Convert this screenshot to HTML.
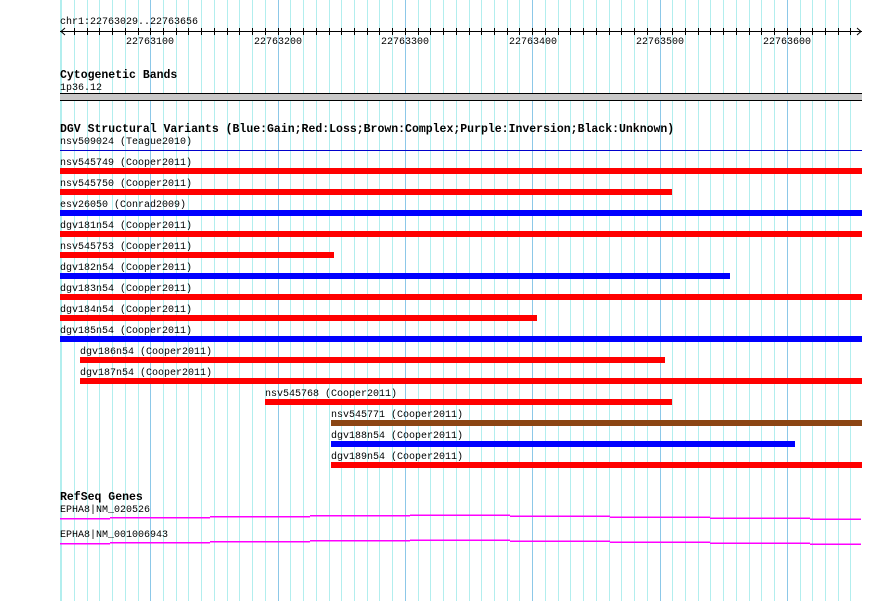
<!DOCTYPE html>
<html><head><meta charset="utf-8"><style>
html,body{margin:0;padding:0;background:#fff;}
svg{display:block}
text{font-family:"Liberation Mono","DejaVu Sans Mono",monospace;font-size:10px;fill:#000}
.b{font-weight:bold;font-size:11.5px}
</style></head><body>
<svg width="890" height="601" xmlns="http://www.w3.org/2000/svg">
<rect width="890" height="601" fill="#fff"/>
<path stroke="#b2eeee" stroke-width="1" fill="none" d="M60.5 0V601M61.5 0V601M74.5 0V601M87.5 0V601M99.5 0V601M112.5 0V601M125.5 0V601M138.5 0V601M163.5 0V601M176.5 0V601M188.5 0V601M201.5 0V601M214.5 0V601M227.5 0V601M239.5 0V601M252.5 0V601M265.5 0V601M290.5 0V601M303.5 0V601M316.5 0V601M329.5 0V601M341.5 0V601M354.5 0V601M367.5 0V601M379.5 0V601M392.5 0V601M418.5 0V601M430.5 0V601M443.5 0V601M456.5 0V601M469.5 0V601M481.5 0V601M494.5 0V601M507.5 0V601M519.5 0V601M545.5 0V601M558.5 0V601M570.5 0V601M583.5 0V601M596.5 0V601M609.5 0V601M621.5 0V601M634.5 0V601M647.5 0V601M672.5 0V601M685.5 0V601M698.5 0V601M710.5 0V601M723.5 0V601M736.5 0V601M749.5 0V601M761.5 0V601M774.5 0V601M800.5 0V601M812.5 0V601M825.5 0V601M838.5 0V601M850.5 0V601"/>
<path stroke="#8cc8e8" stroke-width="1" fill="none" d="M150.5 0V601M278.5 0V601M405.5 0V601M532.5 0V601M660.5 0V601M787.5 0V601"/>
<path stroke="#000" stroke-width="1" fill="none" d="M74.5 28V35M87.5 28V35M99.5 28V35M112.5 28V35M125.5 28V35M138.5 28V35M150.5 28V35M163.5 28V35M176.5 28V35M188.5 28V35M201.5 28V35M214.5 28V35M227.5 28V35M239.5 28V35M252.5 28V35M265.5 28V35M278.5 28V35M290.5 28V35M303.5 28V35M316.5 28V35M329.5 28V35M341.5 28V35M354.5 28V35M367.5 28V35M379.5 28V35M392.5 28V35M405.5 28V35M418.5 28V35M430.5 28V35M443.5 28V35M456.5 28V35M469.5 28V35M481.5 28V35M494.5 28V35M507.5 28V35M519.5 28V35M532.5 28V35M545.5 28V35M558.5 28V35M570.5 28V35M583.5 28V35M596.5 28V35M609.5 28V35M621.5 28V35M634.5 28V35M647.5 28V35M660.5 28V35M672.5 28V35M685.5 28V35M698.5 28V35M710.5 28V35M723.5 28V35M736.5 28V35M749.5 28V35M761.5 28V35M774.5 28V35M787.5 28V35M800.5 28V35M812.5 28V35M825.5 28V35M838.5 28V35M850.5 28V35"/>
<text x="60" y="24">chr1:22763029..22763656</text>
<line x1="60" y1="31.5" x2="862" y2="31.5" stroke="#000"/>
<polyline points="65,28 61,31.5 65,35" fill="none" stroke="#000"/>
<polyline points="857,28 861,31.5 857,35" fill="none" stroke="#000"/>
<text x="150" y="44" text-anchor="middle">22763100</text>
<text x="278" y="44" text-anchor="middle">22763200</text>
<text x="405" y="44" text-anchor="middle">22763300</text>
<text x="533" y="44" text-anchor="middle">22763400</text>
<text x="660" y="44" text-anchor="middle">22763500</text>
<text x="787" y="44" text-anchor="middle">22763600</text>

<text class="b" x="60" y="78">Cytogenetic Bands</text>
<text x="60" y="90">1p36.12</text>
<rect x="60" y="93" width="802" height="8" fill="#c8c8c8"/>
<line x1="60" y1="93.5" x2="862" y2="93.5" stroke="#000"/>
<line x1="60" y1="100.5" x2="862" y2="100.5" stroke="#000"/>

<text class="b" x="60" y="132">DGV Structural Variants (Blue:Gain;Red:Loss;Brown:Complex;Purple:Inversion;Black:Unknown)</text>
<text x="60" y="144">nsv509024 (Teague2010)</text>
<line x1="60" y1="150.5" x2="862" y2="150.5" stroke="#0000cc"/>

<text x="60" y="165">nsv545749 (Cooper2011)</text><rect x="60" y="168" width="802" height="6" fill="#f00"/>
<text x="60" y="186">nsv545750 (Cooper2011)</text><rect x="60" y="189" width="612" height="6" fill="#f00"/>
<text x="60" y="207">esv26050 (Conrad2009)</text><rect x="60" y="210" width="802" height="6" fill="#00f"/>
<text x="60" y="228">dgv181n54 (Cooper2011)</text><rect x="60" y="231" width="802" height="6" fill="#f00"/>
<text x="60" y="249">nsv545753 (Cooper2011)</text><rect x="60" y="252" width="274" height="6" fill="#f00"/>
<text x="60" y="270">dgv182n54 (Cooper2011)</text><rect x="60" y="273" width="670" height="6" fill="#00f"/>
<text x="60" y="291">dgv183n54 (Cooper2011)</text><rect x="60" y="294" width="802" height="6" fill="#f00"/>
<text x="60" y="312">dgv184n54 (Cooper2011)</text><rect x="60" y="315" width="477" height="6" fill="#f00"/>
<text x="60" y="333">dgv185n54 (Cooper2011)</text><rect x="60" y="336" width="802" height="6" fill="#00f"/>
<text x="80" y="354">dgv186n54 (Cooper2011)</text><rect x="80" y="357" width="585" height="6" fill="#f00"/>
<text x="80" y="375">dgv187n54 (Cooper2011)</text><rect x="80" y="378" width="782" height="6" fill="#f00"/>
<text x="265" y="396">nsv545768 (Cooper2011)</text><rect x="265" y="399" width="407" height="6" fill="#f00"/>
<text x="331" y="417">nsv545771 (Cooper2011)</text><rect x="331" y="420" width="531" height="6" fill="#8b4513"/>
<text x="331" y="438">dgv188n54 (Cooper2011)</text><rect x="331" y="441" width="464" height="6" fill="#00f"/>
<text x="331" y="459">dgv189n54 (Cooper2011)</text><rect x="331" y="462" width="531" height="6" fill="#f00"/>

<text class="b" x="60" y="500">RefSeq Genes</text>
<text x="60" y="512">EPHA8|NM_020526</text>
<text x="60" y="537">EPHA8|NM_001006943</text>
<g fill="#f0f">
<rect x="60" y="518" width="50" height="1.5"/><rect x="110" y="517" width="100" height="1.5"/><rect x="210" y="516" width="100" height="1.5"/><rect x="310" y="515" width="100" height="1.5"/><rect x="410" y="514.5" width="100" height="1.5"/><rect x="510" y="515.5" width="100" height="1.5"/><rect x="610" y="516.5" width="100" height="1.5"/><rect x="710" y="517.5" width="100" height="1.5"/><rect x="810" y="518.5" width="51" height="1.5"/>
<rect x="60" y="543" width="50" height="1.5"/><rect x="110" y="542" width="100" height="1.5"/><rect x="210" y="541" width="100" height="1.5"/><rect x="310" y="540" width="100" height="1.5"/><rect x="410" y="539.5" width="100" height="1.5"/><rect x="510" y="540.5" width="100" height="1.5"/><rect x="610" y="541.5" width="100" height="1.5"/><rect x="710" y="542.5" width="100" height="1.5"/><rect x="810" y="543.5" width="51" height="1.5"/>
</g>
</svg>
</body></html>
